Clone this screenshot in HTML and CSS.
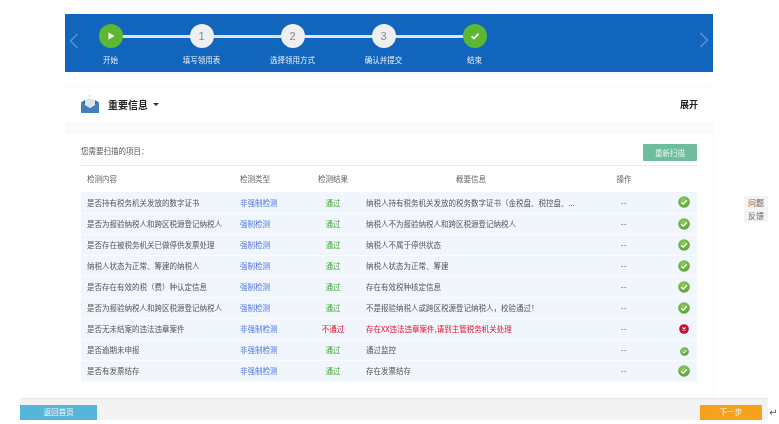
FILE: index.html
```html
<!DOCTYPE html>
<html lang="zh-CN">
<head>
<meta charset="utf-8">
<title>重要信息</title>
<link rel="stylesheet" href="styles.css">
</head>
<body>
<svg class="defs" width="0" height="0" aria-hidden="true">
  <defs>
    <radialGradient id="gg" cx="45%" cy="35%" r="70%"><stop offset="0" stop-color="#8fd05a"/><stop offset="1" stop-color="#4f9e35"/></radialGradient>
    <symbol id="ok" viewBox="0 0 12 12"><circle cx="6" cy="6" r="5.8" fill="url(#gg)"/><path d="M3.2 6.2 5.2 8.1 8.9 4.2" fill="none" stroke="#fff" stroke-width="1.3"/></symbol>
    <symbol id="bad" viewBox="0 0 12 12"><circle cx="6" cy="6" r="5.8" fill="#c8102e"/><path d="M4.2 4.2 7.8 7.8M7.8 4.2 4.2 7.8" fill="none" stroke="#fff" stroke-width="1.3"/></symbol>
  </defs>
</svg>
<div class="page">
  <header class="banner">
    <svg class="chev chev-l" viewBox="0 0 10 16"><path d="M8.5 1 1.5 8l7 7" fill="none" stroke="#5d93d2" stroke-width="1.5"/></svg>
    <ol class="steps">
      <li class="step"><span class="dot dot-on"><svg class="glyph" viewBox="0 0 10 10"><path d="M2.5 1.5 8.5 5l-6 3.5z" fill="#fff"/></svg></span><span class="step-label">开始</span></li>
      <li class="step"><span class="dot">1</span><span class="step-label">填写领用表</span></li>
      <li class="step"><span class="dot">2</span><span class="step-label">选择领用方式</span></li>
      <li class="step"><span class="dot">3</span><span class="step-label">确认并提交</span></li>
      <li class="step step-last"><span class="dot dot-on"><svg class="glyph" viewBox="0 0 10 10"><path d="M1.5 5.3 4 7.6 8.6 2.6" fill="none" stroke="#fff" stroke-width="1.6"/></svg></span><span class="step-label">结束</span></li>
    </ol>
    <svg class="chev chev-r" viewBox="0 0 10 16"><path d="M1.5 1l7 7-7 7" fill="none" stroke="#5d93d2" stroke-width="1.5"/></svg>
  </header>

  <section class="info">
    <svg class="mail" viewBox="0 0 18 18">
      <path d="M0 7.5 9 13l9-5.5V18H0z" fill="#3f80b8"/>
      <path d="M0 7.5 4 5v5zM18 7.5 14 5v5z" fill="#2f6ea6"/>
      <path d="M4 5.5Q9 1 14 5.5V9.5L9 12.8 4 9.5z" fill="#d9e4ee"/>
      <circle cx="8.5" cy="1" r=".8" fill="#b9c6d2"/>
    </svg>
    <h2 class="info-title">重要信息</h2>
    <span class="caret"></span>
    <span class="expand">展开</span>
  </section>

  <div class="band"></div>

  <main class="scan">
    <div class="scan-head">
      <span class="scan-title">您需要扫描的项目：</span>
      <button class="rescan">重新扫描</button>
    </div>
    <table class="grid">
      <colgroup><col class="c1"><col class="c2"><col class="c3"><col class="c4"><col class="c5"><col class="c6"></colgroup>
      <thead>
        <tr><th class="left">检测内容</th><th class="left flush">检测类型</th><th>检测结果</th><th>概要信息</th><th>操作</th><th></th></tr>
      </thead>
      <tbody>
        <tr><td class="left">是否持有税务机关发放的数字证书</td><td class="type">非强制检测</td><td class="pass">通过</td><td class="left">纳税人持有税务机关发放的税务数字证书（金税盘、税控盘、...</td><td class="act">--</td><td class="state"><svg class="i i-ok"><use href="#ok"/></svg></td></tr>
        <tr><td class="left">是否为报验纳税人和跨区税源登记纳税人</td><td class="type">强制检测</td><td class="pass">通过</td><td class="left">纳税人不为报验纳税人和跨区税源登记纳税人</td><td class="act">--</td><td class="state"><svg class="i i-ok"><use href="#ok"/></svg></td></tr>
        <tr><td class="left">是否存在被税务机关已做停供发票处理</td><td class="type">强制检测</td><td class="pass">通过</td><td class="left">纳税人不属于停供状态</td><td class="act">--</td><td class="state"><svg class="i i-ok"><use href="#ok"/></svg></td></tr>
        <tr><td class="left">纳税人状态为正常、筹建的纳税人</td><td class="type">强制检测</td><td class="pass">通过</td><td class="left">纳税人状态为正常、筹建</td><td class="act">--</td><td class="state"><svg class="i i-ok"><use href="#ok"/></svg></td></tr>
        <tr><td class="left">是否存在有效的税（费）种认定信息</td><td class="type">强制检测</td><td class="pass">通过</td><td class="left">存在有效税种核定信息</td><td class="act">--</td><td class="state"><svg class="i i-ok"><use href="#ok"/></svg></td></tr>
        <tr><td class="left">是否为报验纳税人和跨区税源登记纳税人</td><td class="type">强制检测</td><td class="pass">通过</td><td class="left">不是报验纳税人或跨区税源登记纳税人，校验通过！</td><td class="act">--</td><td class="state"><svg class="i i-ok"><use href="#ok"/></svg></td></tr>
        <tr><td class="left">是否无未结案的违法违章案件</td><td class="type">非强制检测</td><td class="fail">不通过</td><td class="left fail">存在XX违法违章案件,请到主管税务机关处理</td><td class="act">--</td><td class="state"><svg class="i i-bad"><use href="#bad"/></svg></td></tr>
        <tr><td class="left">是否逾期未申报</td><td class="type">非强制检测</td><td class="pass">通过</td><td class="left">通过监控</td><td class="act">--</td><td class="state"><svg class="i i-small"><use href="#ok"/></svg></td></tr>
        <tr><td class="left">是否有发票结存</td><td class="type">非强制检测</td><td class="pass">通过</td><td class="left">存在发票结存</td><td class="act">--</td><td class="state"><svg class="i i-ok"><use href="#ok"/></svg></td></tr>
      </tbody>
    </table>
  </main>

  <div class="foot-row">
    <footer class="foot">
      <button class="btn btn-home">返回首页</button>
      <button class="btn btn-next">下一步</button>
    </footer>
    <span class="ret">↵</span>
  </div>

  <aside class="feedback">问题<br>反馈</aside>
</div>
</body>
</html>
```

FILE: styles.css
```css
* { box-sizing: border-box; }
html, body { margin: 0; padding: 0; background: #fff; }
body { width: 779px; height: 424px; overflow: hidden; font-family: "Noto Sans CJK SC", "Liberation Sans", sans-serif; }
.defs { position: absolute; }
.page { position: relative; width: 779px; height: 424px; padding-top: 14px; filter: blur(.3px); }

.banner { position: relative; width: 648px; height: 58px; margin-left: 65px; background: #1265bd; }
.chev { position: absolute; top: 19px; width: 10px; height: 16px; }
.chev-l { left: 4px; }
.chev-r { right: 4px; top: 18px; }
.steps { display: flex; margin: 0; padding: 10px 0 0; list-style: none; }
.step { position: relative; display: flex; flex-direction: column; align-items: center; width: 91px; }
.step::after { content: ""; position: absolute; top: 11px; left: 50%; width: 91px; height: 3px; background: #dfe3ea; }
.step-last::after { display: none; }
.dot { position: relative; z-index: 1; display: flex; align-items: center; justify-content: center; width: 24px; height: 24px; border-radius: 50%; background: #efefef; color: #8a8a8a; font: 11px/1 "Liberation Sans", sans-serif; }
.dot-on { background: #5cb833; }
.glyph { width: 10px; height: 10px; }
.step-label { margin-top: 6px; color: #eaf2fb; font-size: 7.5px; line-height: 12px; white-space: nowrap; }

.info { display: flex; align-items: center; width: 648px; height: 36px; margin: 14px 0 0 65px; padding: 0 15px 0 16px; background: #fff; border-top: 1px solid #f8f8f8; }
.mail { width: 18px; height: 18px; margin-top: -1px; }
.info-title { margin: 0 0 0 9px; color: #222; font-size: 10px; line-height: 14px; font-weight: 700; }
.caret { width: 0; height: 0; margin: 0 0 0 5px; border: 3px solid transparent; border-top: 3px solid #333; border-bottom: 0; }
.expand { margin-left: auto; color: #222; font-size: 9px; font-weight: 700; }

.band { width: 648px; height: 12px; margin-left: 65px; background: #fafafa; }

.scan { width: 648px; height: 264px; margin-left: 65px; padding: 10px 16px 0; background: #fff; box-shadow: 1px 0 0 #f9f9f9; }
.scan-head { display: flex; align-items: center; justify-content: space-between; height: 22px; padding-bottom: 5px; border-bottom: 1px dotted #d8d8d8; }
.scan-title { position: relative; top: -1px; color: #555; font-size: 7.5px; line-height: 12px; }
.rescan { width: 54px; height: 17px; padding: 0; border: 0; border-radius: 1px; background: #6fbd9f; color: #e4f5ee; font: 7.5px/17px "Noto Sans CJK SC", sans-serif; }

.grid { width: 616px; table-layout: fixed; border-collapse: collapse; font-size: 7.5px; color: #555; }
.c1 { width: 159px; }
.c2 { width: 66px; }
.c3 { width: 54px; }
.c4 { width: 222px; }
.c5 { width: 84px; }
.c6 { width: 31px; }
.grid th { height: 26px; padding: 0 0 2px; color: #666; font-weight: 400; text-align: center; }
.grid td { height: 21px; padding: 0; text-align: center; white-space: nowrap; overflow: hidden; background: #f1f6fd; border-bottom: 1px solid #fbfcff; }
.grid .left { padding-left: 6px; text-align: left; }
.grid .flush { padding-left: 0; }
.grid .type { color: #4f78e0; text-align: left; }
.grid .pass { color: #46a83c; }
.grid .fail { color: #e8112d; }
.grid .act { font-family: "Liberation Sans", sans-serif; letter-spacing: .6px; }
.grid .state { padding-left: 5px; }
.i { display: block; margin: 0 auto; }
.i-ok { width: 12px; height: 12px; }
.i-bad { width: 10px; height: 10px; }
.i-small { width: 9px; height: 9px; position: relative; top: 2px; }

.foot-row { display: flex; align-items: flex-end; margin-left: 20px; }
.foot { display: flex; justify-content: space-between; width: 748px; height: 22px; padding: 6px 6px 0 0; background: #f3f3f3; border-top: 1px solid #e9e9e9; }
.btn { height: 15px; padding: 0 0 1px; border: 0; color: #f1f8fb; font: 7.5px/14px "Noto Sans CJK SC", sans-serif; }
.btn-home { width: 77px; background: #55b6d9; }
.btn-next { width: 62px; background: #f6a21e; }
.ret { position: relative; top: -2px; margin-left: 1px; color: #555; font: 10px/10px "DejaVu Sans", sans-serif; }

.feedback { position: absolute; top: 196px; left: 744px; width: 24px; height: 26px; background: #f4f4f4; color: #666; font-size: 8px; line-height: 13px; text-align: center; }
```
